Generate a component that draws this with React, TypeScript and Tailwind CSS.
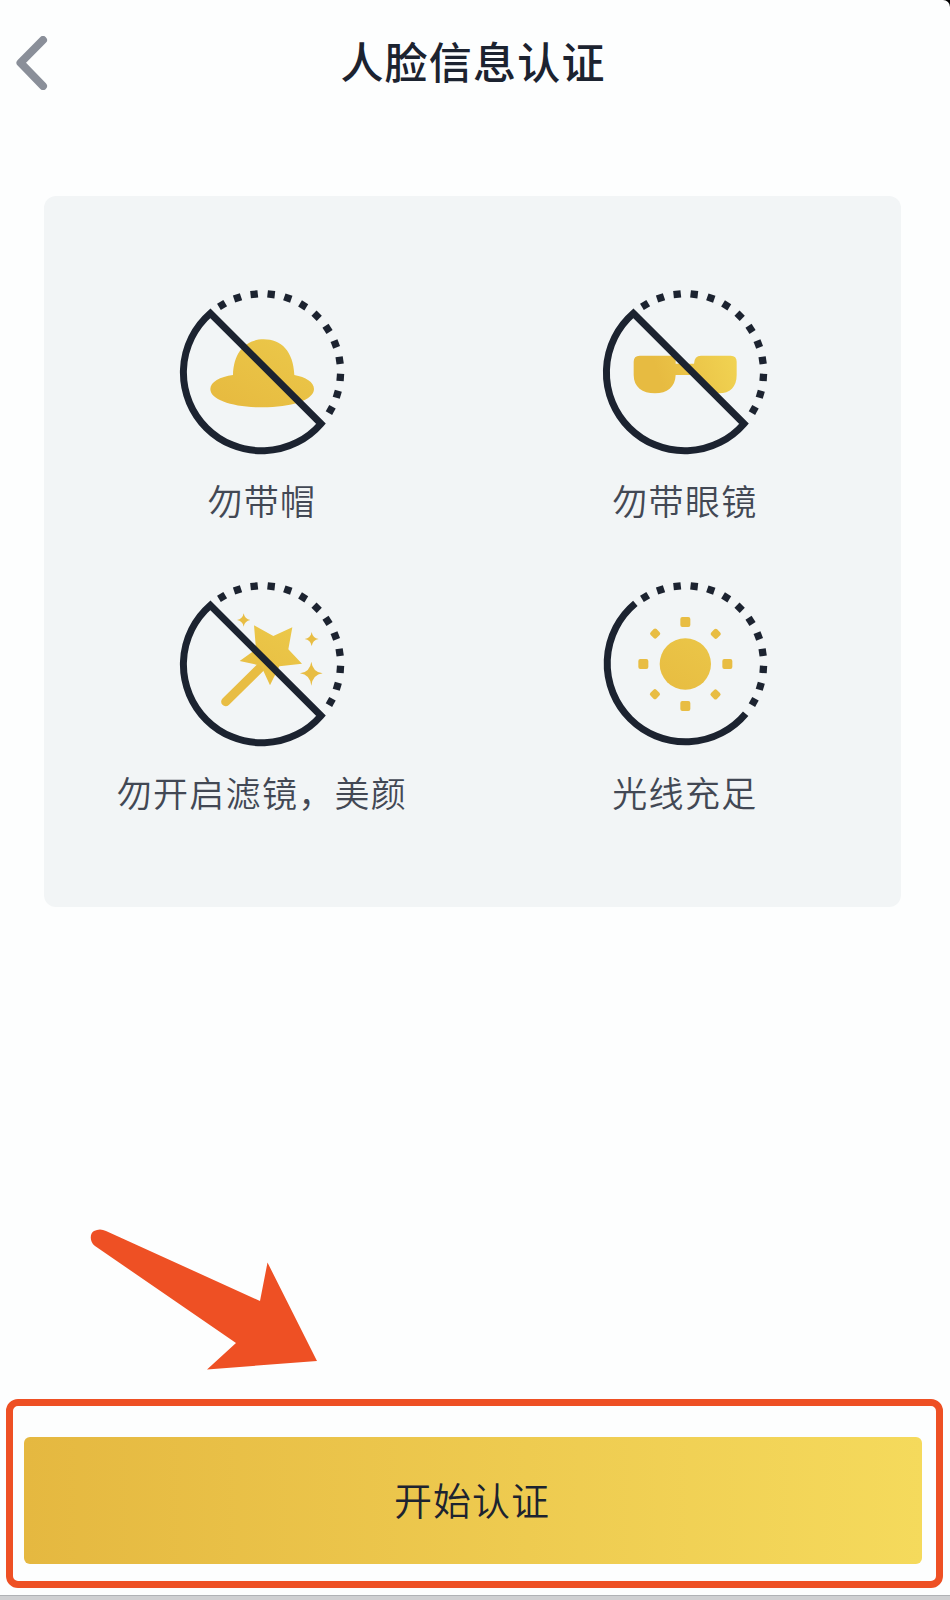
import type { ReactNode } from "react";

const GOLD = "#e8bd43";
const INK = "#1c2330";

const dots = [-121, -108.5, -96, -83.5, -71, -58.5, -46, -33.5, -21, -8.5, 4, 16.5, 29];
const rays = [0, 45, 90, 135, 180, 225, 270, 315];

function Ring({ slashed = true, children }: { slashed?: boolean; children: ReactNode }) {
  return (
    <svg viewBox="30 30 492 492" className="size-[164px] overflow-visible" fill="none">
      <defs>
        <linearGradient id="gold" x1="150" y1="330" x2="430" y2="230" gradientUnits="userSpaceOnUse">
          <stop offset="0.2" stopColor="#e7bb41" />
          <stop offset="1" stopColor="#f1d352" />
        </linearGradient>
        <linearGradient id="gold-soft" x1="200" y1="380" x2="330" y2="160" gradientUnits="userSpaceOnUse">
          <stop stopColor="#e7bb40" />
          <stop offset="1" stopColor="#ebc749" />
        </linearGradient>
      </defs>
      {children}
      <path
        d={slashed ? "M121 100A235 235 0 1 0 453 431Z" : "M127 94A235 235 0 1 0 458 425"}
        stroke={INK}
        strokeWidth="21"
      />
      {dots.map((angle) => (
        <rect key={angle} x="500.500" y="265" width="22" height="22" fill={INK} transform={`rotate(${angle} 277 276)`} />
      ))}
    </svg>
  );
}

function Hat() {
  return (
    <path
      fill="url(#gold-soft)"
      d="M189 285C191 214 229 178 281 178C334 178 370 214 373 285C407 291 432 306 432 327C432 360 363 382 277 382C190 382 121 360 121 327C121 306 150 290 189 285Z"
    />
  );
}

function Glasses() {
  return (
    <path
      fill="url(#gold)"
      d="M140 227H232Q248 227 248 243V251H303Q304 227 324 227H413Q431 227 431 245V285C431 321 411 340 378 340C342 340 318 321 311 285H248C247 321 222 340 186 340C148 340 122 321 122 285V245Q122 227 140 227Z"
    />
  );
}

function Wand() {
  return (
    <>
      <path d="M167 389L275 283" stroke={GOLD} strokeWidth="27" strokeLinecap="round" />
      <path
        fill="url(#gold-soft)"
        d="M252 160L310 192L367 166L355 232L396 275L328 283L300 340L273 281L209 267L258 232Z"
      />
      <path
        fill={GOLD}
        d="M221 124Q224 141 241 144Q224 147 221 164Q218 147 201 144Q218 141 221 124ZM425 180Q428 198 446 201Q428 204 425 222Q422 204 404 201Q422 198 425 180ZM424 269Q428 300 458 304Q428 308 424 341Q420 308 390 304Q420 300 424 269Z"
      />
    </>
  );
}

function Sun() {
  return (
    <>
      <circle cx="277" cy="276" r="77" fill="url(#gold-soft)" />
      {rays.map((angle) => (
        <rect
          key={angle}
          x={angle % 90 ? 393 : 388}
          y={angle % 90 ? 264 : 261}
          width={angle % 90 ? 25 : 30}
          height={angle % 90 ? 25 : 30}
          rx="6"
          fill={GOLD}
          transform={`rotate(${angle} 277 276)`}
        />
      ))}
    </>
  );
}

const tips = [
  { label: "勿带帽", icon: <Ring><Hat /></Ring> },
  { label: "勿带眼镜", icon: <Ring><Glasses /></Ring> },
  { label: "勿开启滤镜，美颜", icon: <Ring><Wand /></Ring> },
  { label: "光线充足", icon: <Ring slashed={false}><Sun /></Ring> },
];

export default function App() {
  return (
    <div className="h-[1600px] w-[950px] overflow-hidden bg-black font-['Noto_Sans_CJK_SC',sans-serif]">
      <div className="flex h-full flex-col rounded-tr-[7px] bg-[#fdfefe]">
        <header className="grid h-[126px] shrink-0 grid-cols-[60px_1fr_64px] items-center">
          <button type="button" aria-label="返回" className="pl-4">
            <svg viewBox="0 0 32 54" className="h-[54px] w-8" fill="none">
              <path d="M27 4L4.500 26.700L27 50" stroke="#8a8f99" strokeWidth="8" strokeLinecap="round" strokeLinejoin="round" />
            </svg>
          </button>
          <h1 className="pb-[7px] text-center text-[43px] leading-[60px] font-medium tracking-[1.2px] text-[#1c2330]">人脸信息认证</h1>
        </header>

        <main className="mt-[70px] ml-[44.400px] grid h-[711px] w-[857px] shrink-0 grid-cols-[423px_423px] content-start gap-y-[34px] rounded-xl bg-[#f2f5f6] pt-[94px] pl-[6px]">
          {tips.map(({ label, icon }) => (
            <section key={label} className="flex h-[258px] flex-col items-center">
              {icon}
              <p className="mt-[21px] text-[35px] leading-[50px] font-[350] tracking-[1.3px] text-[#424854]">{label}</p>
            </section>
          ))}
        </main>

        <svg viewBox="0 0 250 170" className="mt-[308px] ml-20 h-[170px] w-[250px] shrink-0" aria-hidden="true">
          <path
            fill="#ee5024"
            d="M26 16L180 86L187.500 47.500L237 146L127 154.500L156 128L15 31C9 26 10 18 14 16C18 14 22 14 26 16Z"
          />
        </svg>

        <div className="mt-[14px] ml-[6px] h-[189px] w-[937px] shrink-0 rounded-xl border-7 border-[#ee5024] px-[11px] pt-[31px]">
          <button
            type="button"
            className="h-[127px] w-[898px] rounded-md bg-linear-to-r from-[#e5b840] to-[#f5da5c] pr-0.5 pb-1 text-[38px] font-[350] tracking-[1px] text-[#1c2330]"
          >
            开始认证
          </button>
        </div>
        <div className="mt-auto h-[5px] shrink-0 border-t border-[#b0b2b5] bg-[#cfd0d2]" />
      </div>
    </div>
  );
}
